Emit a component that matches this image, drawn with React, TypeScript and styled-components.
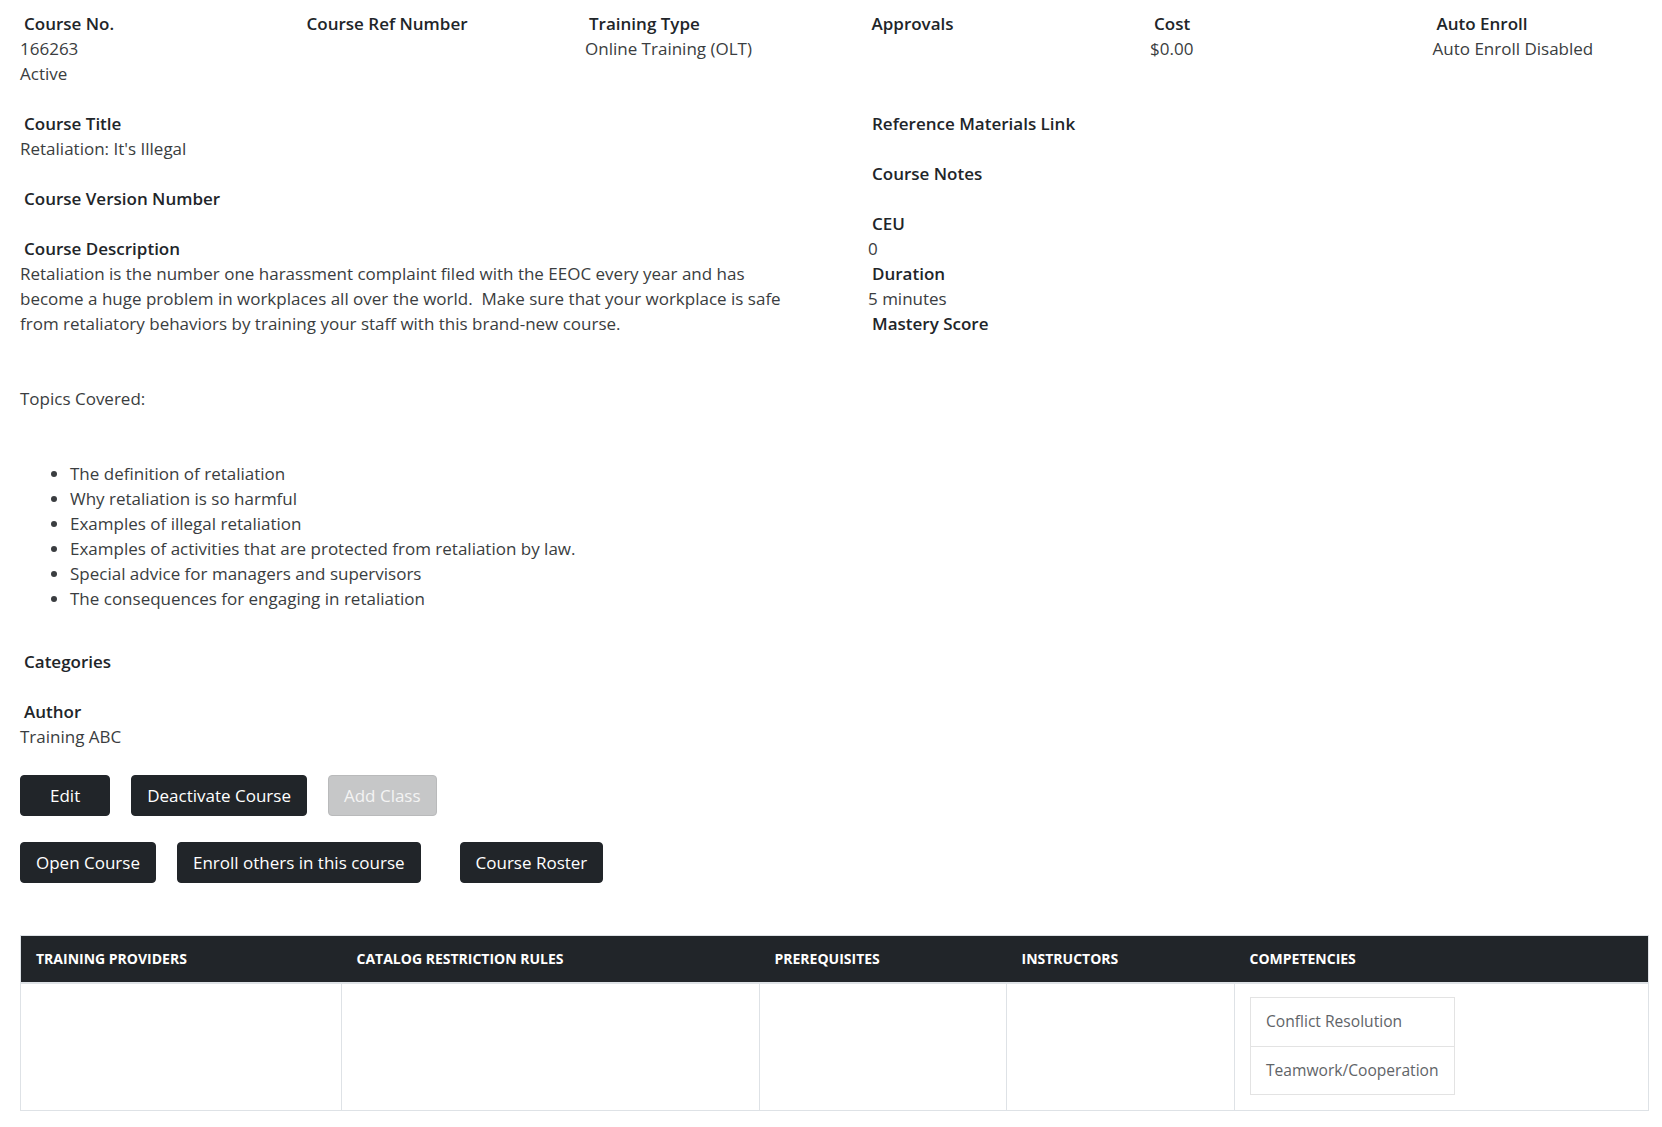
import React from "react";
import styled, { createGlobalStyle } from "styled-components";

const GlobalStyle = createGlobalStyle`
  html, body {
    margin: 0;
    padding: 0;
    background: #fff;
  }
  body {
    font-family: "Open Sans", "Liberation Sans", Arial, sans-serif;
    font-size: 17px;
    line-height: 25px;
    color: #333;
  }
  *, *::before, *::after {
    box-sizing: border-box;
  }
`;

const topFields = [
  { label: "Course No.", values: ["166263", "Active"] },
  { label: "Course Ref Number", values: [] },
  { label: "Training Type", values: ["Online Training (OLT)"] },
  { label: "Approvals", values: [] },
  { label: "Cost", values: ["$0.00"] },
  { label: "Auto Enroll", values: ["Auto Enroll Disabled"] },
];

const topics = [
  "The definition of retaliation",
  "Why retaliation is so harmful",
  "Examples of illegal retaliation",
  "Examples of activities that are protected from retaliation by law.",
  "Special advice for managers and supervisors",
  "The consequences for engaging in retaliation",
];

const competencies = ["Conflict Resolution", "Teamwork/Cooperation"];

export default function App() {
  return (
    <>
      <GlobalStyle />
      <Page>
        <TopGrid>
          {topFields.map((f) => (
            <Field key={f.label} $tight>
              <Label>{f.label}</Label>
              {f.values.map((v) => (
                <Value key={v}>{v}</Value>
              ))}
            </Field>
          ))}
        </TopGrid>

        <Columns>
          <LeftColumn>
            <Field>
              <Label>Course Title</Label>
              <Value>Retaliation: It's Illegal</Value>
            </Field>
            <Field>
              <Label>Course Version Number</Label>
            </Field>
            <Field $tight>
              <Label>Course Description</Label>
              <Description>
                <Paragraph>
                  Retaliation is the number one harassment complaint filed with
                  the EEOC every year and has become a huge problem in
                  workplaces all over the world.&nbsp; Make sure that your
                  workplace is safe from retaliatory behaviors by training your
                  staff with this brand-new course.
                </Paragraph>
                <Paragraph>Topics Covered:</Paragraph>
                <TopicList>
                  {topics.map((t) => (
                    <li key={t}>{t}</li>
                  ))}
                </TopicList>
              </Description>
            </Field>
            <Field>
              <Label>Categories</Label>
            </Field>
            <Field $tight>
              <Label>Author</Label>
              <Value>Training ABC</Value>
            </Field>
          </LeftColumn>

          <RightColumn>
            <Field>
              <Label>Reference Materials Link</Label>
            </Field>
            <Field>
              <Label>Course Notes</Label>
            </Field>
            <Field $tight>
              <Label>CEU</Label>
              <Value>0</Value>
            </Field>
            <Field $tight>
              <Label>Duration</Label>
              <Value>5 minutes</Value>
            </Field>
            <Field $tight>
              <Label>Mastery Score</Label>
            </Field>
          </RightColumn>
        </Columns>

        <ButtonRow>
          <Button $wide>Edit</Button>
          <Button>Deactivate Course</Button>
          <Button disabled>Add Class</Button>
        </ButtonRow>
        <ButtonRow>
          <Button>Open Course</Button>
          <Button>Enroll others in this course</Button>
          <Button $push>Course Roster</Button>
        </ButtonRow>

        <Table>
          <colgroup>
            <col style={{ width: 321 }} />
            <col style={{ width: 418 }} />
            <col style={{ width: 247 }} />
            <col style={{ width: 228 }} />
            <col />
          </colgroup>
          <thead>
            <tr>
              <Th>Training Providers</Th>
              <Th>Catalog Restriction Rules</Th>
              <Th>Prerequisites</Th>
              <Th>Instructors</Th>
              <Th>Competencies</Th>
            </tr>
          </thead>
          <tbody>
            <tr>
              <Td />
              <Td />
              <Td />
              <Td />
              <Td>
                <ListGroup>
                  {competencies.map((c) => (
                    <ListItem key={c}>{c}</ListItem>
                  ))}
                </ListGroup>
              </Td>
            </tr>
          </tbody>
        </Table>
      </Page>
    </>
  );
}

const Page = styled.div`
  padding: 11px 13px 17px 20px;
`;

const TopGrid = styled.div`
  display: grid;
  grid-template-columns: repeat(5, 282.5px) 1fr;
  margin-bottom: 25px;
`;

const Field = styled.div<{ $tight?: boolean }>`
  display: flex;
  flex-direction: column;
  margin-bottom: ${(p) => (p.$tight ? "0" : "25px")};
`;

const Label = styled.div`
  padding-left: 4px;
  font-weight: 600;
  color: #212529;
  line-height: 25px;
`;

const Value = styled.div`
  color: #3a3d40;
  line-height: 25px;
`;

const Columns = styled.div`
  display: grid;
  grid-template-columns: 848px 1fr;
`;

const LeftColumn = styled.div`
  display: flex;
  flex-direction: column;
  padding-right: 73px;
`;

const RightColumn = styled.div`
  display: flex;
  flex-direction: column;
`;

const Description = styled.div`
  color: #3a3d40;
  margin-bottom: 38px;
`;

const Paragraph = styled.p`
  margin: 0 0 50px;
`;

const TopicList = styled.ul`
  margin: 0;
  padding-left: 50px;

  li {
    line-height: 25px;
  }
`;

const ButtonRow = styled.div`
  display: flex;
  gap: 21px;
  margin-top: 26px;
`;

const Button = styled.button<{ $wide?: boolean; $push?: boolean }>`
  height: 41px;
  padding: 0 ${(p) => (p.$wide ? "29px" : "15px")};
  margin-left: ${(p) => (p.$push ? "18px" : "0")};
  border: 1px solid #212529;
  border-radius: 4px;
  background: #212529;
  color: #fff;
  font-family: inherit;
  font-size: 17px;
  cursor: pointer;

  &:disabled {
    background: #c6c7c8;
    border-color: #b9babb;
    color: #f4f4f4;
    cursor: default;
  }
`;

const Table = styled.table`
  width: 100%;
  margin-top: 52px;
  border-collapse: collapse;
  border: 1px solid #dee2e6;
  table-layout: fixed;
`;

const Th = styled.th`
  height: 47px;
  padding: 0 15px;
  background: #212529;
  color: #fff;
  font-size: 14px;
  font-weight: 700;
  text-align: left;
  text-transform: uppercase;
  border-bottom: 2px solid #dee2e6;
`;

const Td = styled.td`
  padding: 13px 15px 15px;
  border-left: 1px solid #dee2e6;
  vertical-align: top;
  height: 123px;
`;

const ListGroup = styled.ul`
  display: inline-flex;
  flex-direction: column;
  margin: 0;
  padding: 0;
  list-style: none;
  border: 1px solid #e3e3e3;
  min-width: 205px;
`;

const ListItem = styled.li`
  height: 48px;
  display: flex;
  align-items: center;
  padding: 0 15px;
  font-size: 15.6px;
  color: #5f6468;

  & + & {
    border-top: 1px solid #e3e3e3;
  }
`;
